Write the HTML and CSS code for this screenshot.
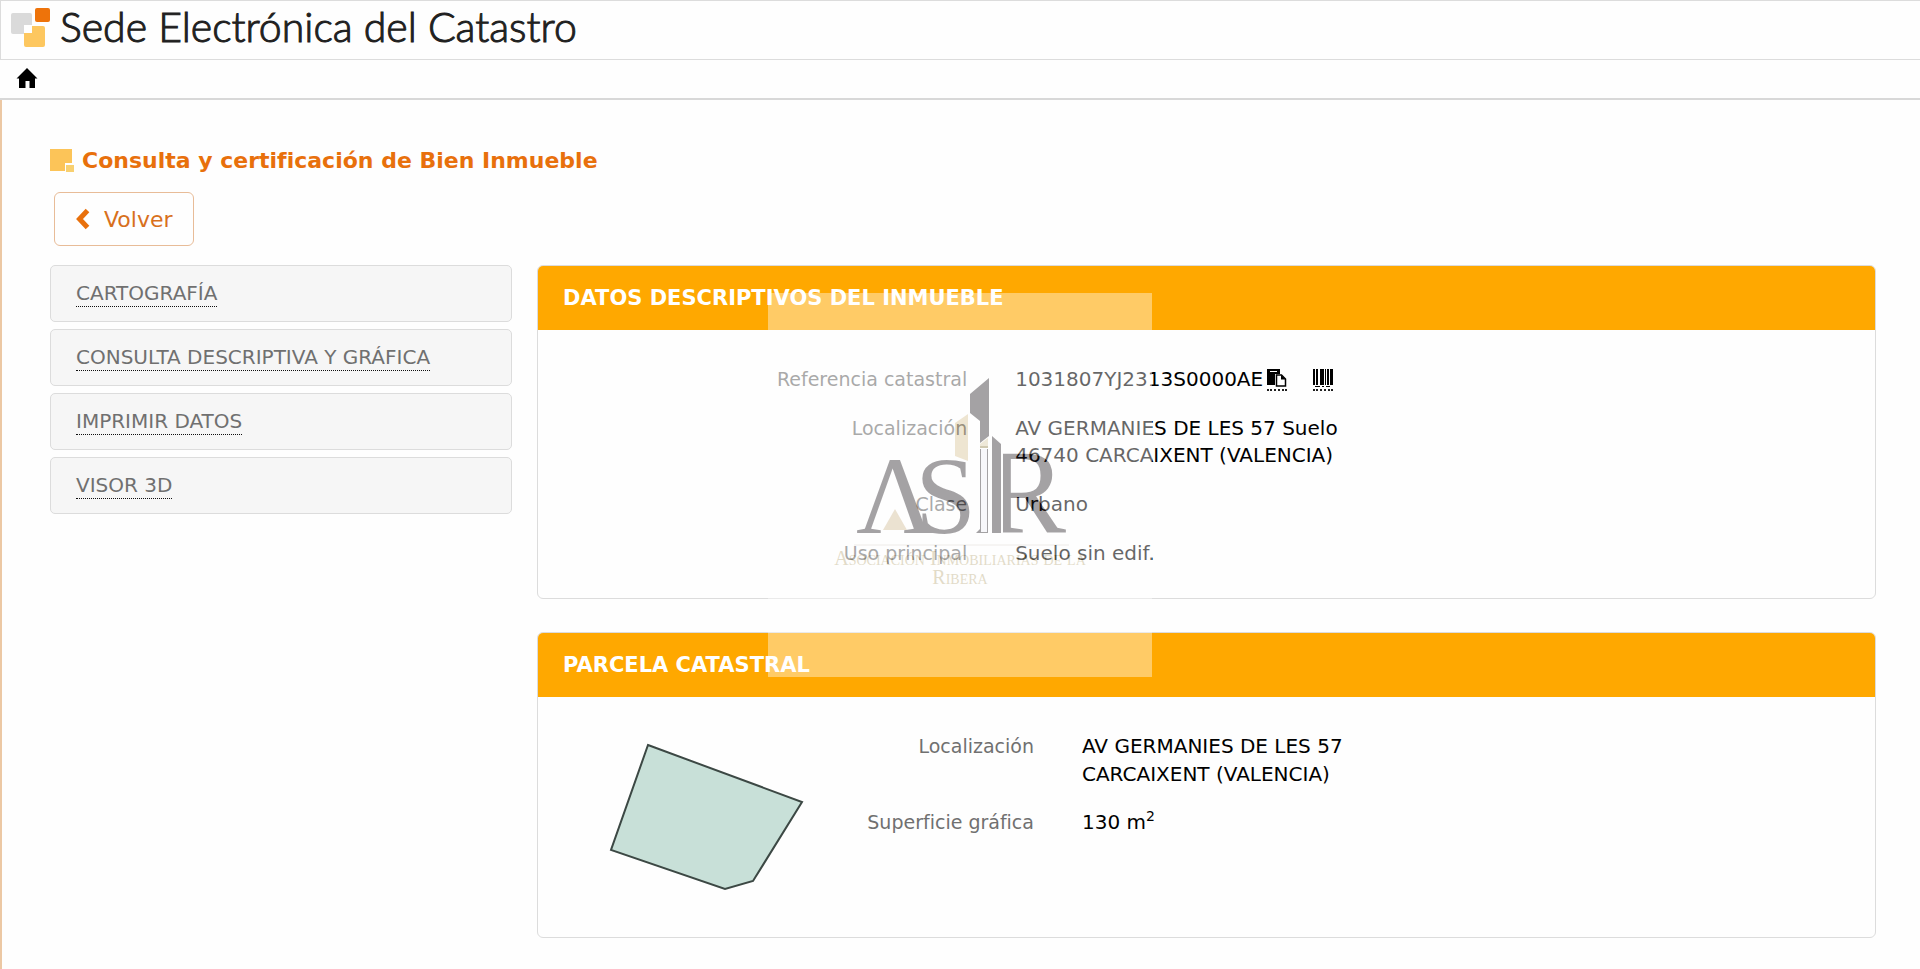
FILE: index.html
```html
<!DOCTYPE html>
<html lang="es">
<head>
<meta charset="utf-8">
<title>Sede Electrónica del Catastro</title>
<link rel="stylesheet" href="styles.css">
</head>
<body>
<header class="brand">
  <svg class="brand-logo" width="40" height="40" viewBox="0 0 40 40" aria-hidden="true">
    <rect x="0" y="5" width="21" height="21" rx="2" fill="#dadada"/>
    <rect x="24" y="0" width="15" height="14" rx="2" fill="#ee730a"/>
    <path d="M21 18h11a2 2 0 0 1 2 2v17a2 2 0 0 1-2 2H15a2 2 0 0 1-2-2V25h8z" fill="#fdc75f"/>
    <rect x="13" y="17" width="8" height="8" fill="#fff"/>
  </svg>
  <span class="brand-name">Sede Electrónica del Catastro</span>
</header>
<nav class="nav">
  <a class="home" href="#" aria-label="Inicio">
    <svg width="22" height="20" viewBox="0 0 22 20" aria-hidden="true"><path d="M11 0 21.500 10.500H19V20H13.500V13H9.500V20H3V10.500H.5z"/></svg>
  </a>
</nav>
<main class="page">
  <h1 class="title">
    <svg width="24" height="24" viewBox="0 0 24 24" aria-hidden="true"><path d="M0 0h22v14h-7v8H0z" fill="#fcc458"/><rect x="16" y="16" width="8" height="7" fill="#f8d070"/></svg>
    Consulta y certificación de Bien Inmueble
  </h1>
  <button class="back" type="button">
    <svg width="15" height="22" viewBox="0 0 15 22" aria-hidden="true"><path d="M12.500 2.500 4.500 11l8 8.500" fill="none" stroke="#e8700c" stroke-width="5"/></svg>
    Volver
  </button>
  <div class="columns">
    <ul class="menu">
      <li><a href="#">CARTOGRAFÍA</a></li>
      <li><a href="#">CONSULTA DESCRIPTIVA Y GRÁFICA</a></li>
      <li><a href="#">IMPRIMIR DATOS</a></li>
      <li><a href="#">VISOR 3D</a></li>
    </ul>
    <div class="panels">
      <section class="panel">
        <h2 class="panel-title">DATOS DESCRIPTIVOS DEL INMUEBLE</h2>
        <dl class="data data-main">
          <dt>Referencia catastral</dt>
          <dd class="reference">1031807YJ2313S0000AE
            <button class="tool" type="button" aria-label="Copiar"><svg width="20" height="18" viewBox="0 0 20 18" aria-hidden="true"><path d="M0 0h13v5H8v11H0z"/><path d="M3 2h7v1H3z" fill="#fff"/><path d="M9.500 6h5l4 4v7h-9z" fill="#fff" stroke="#000" stroke-width="1.500"/><path d="M14 6v4.500h5z"/></svg></button>
            <button class="tool" type="button" aria-label="Código de barras"><svg width="20" height="18" viewBox="0 0 20 18" aria-hidden="true"><path d="M0 0h2v16H0zM3 0h2v16H3zM7 0h4v16H7zM12 0h1v16h-1zM14 0h2v16h-2zM17 0h3v16h-3zM2 17h5v1H2zM9 17h2v1H9zM13 17h4v1h-4z"/></svg></button>
          </dd>
          <dt>Localización</dt>
          <dd>AV GERMANIES DE LES 57 Suelo<br>46740 CARCAIXENT (VALENCIA)</dd>
          <dt>Clase</dt>
          <dd>Urbano</dd>
          <dt>Uso principal</dt>
          <dd>Suelo sin edif.</dd>
        </dl>
      </section>
      <section class="panel">
        <h2 class="panel-title">PARCELA CATASTRAL</h2>
        <div class="parcel">
          <svg class="plot" width="196" height="148" viewBox="0 0 196 148" role="img" aria-label="Plano de la parcela"><path d="M39 2 193 59 144 138 116 146 2 107z" fill="#c8e0d8" stroke="#3c4844" stroke-width="2"/></svg>
          <dl class="data data-parcel">
            <dt>Localización</dt>
            <dd>AV GERMANIES DE LES 57<br>CARCAIXENT (VALENCIA)</dd>
            <dt>Superficie gráfica</dt>
            <dd>130 m<sup>2</sup></dd>
          </dl>
        </div>
      </section>
    </div>
  </div>
</main>
<svg class="watermark" viewBox="768 292 384 384" aria-hidden="true">
  <defs><clipPath id="bowl"><rect x="1003" y="440" width="80" height="100"/></clipPath></defs>
  <rect x="768" y="292" width="384" height="384" fill="#fff"/>
  <g fill="#201a20">
    <text class="mark" x="856" y="532">Λ</text>
    <text class="mark" x="915" y="532">S</text>
    <text class="mark mark-wide" x="986" y="532" clip-path="url(#bowl)">R</text>
    <path d="M968 410h11v70l-11-8z" fill="#fff"/>
    <path d="M970 393 989 377v58l-9 7v-22l-10-8z"/>
    <path d="M992 435 1001 443v89h-9zM976 532l4-4v-80h8v84z"/>
  </g>
  <path d="M981 448h6v83h-6z" fill="#eeeef6"/>
  <path d="M955 422 968 413v47l-13-5z" fill="#d8c090"/>
  <path d="M980 443 988 437v9h-8z" fill="#d8c8a0"/>
  <path d="M980 445h8v2h-8z" fill="#8c7c40"/>
  <path d="M883 529 895 508 907 529z" fill="#d0b890"/>
  <path d="M854 544h215" stroke="#d8d0c8"/>
  <text class="caption" x="960" y="564">Asociación Inmobiliarias de la</text>
  <text class="caption" x="960" y="583">Ribera</text>
</svg>
</body>
</html>
```
FILE: styles.css
```css
* { box-sizing: border-box; }
body {
  margin: 0;
  min-height: 100vh;
  display: flex;
  flex-direction: column;
  background: #fefefe;
  color: #000;
  font: 19px/27px "DejaVu Sans", Verdana, sans-serif;
}
.brand {
  display: flex;
  gap: 9px;
  height: 60px;
  padding: 7px 10px;
  border: 1px solid #dcdcdc;
  border-right: 0;
}
.brand-name {
  font: 300 41px/38px Lato, sans-serif;
  color: #202020;
  -webkit-text-stroke: 1px #202020;
}
.nav {
  height: 40px;
  padding: 8px 16px;
  border-bottom: 2px solid #d8d8d8;
}
.home { display: block; width: 22px; }
.home svg { display: block; }
.page {
  flex: 1;
  padding: 45px 44px 20px 48px;
  border-left: 2px solid #ecc8a4;
}
.title {
  display: flex;
  align-items: center;
  gap: 8px;
  margin: 0 0 16px;
  font-size: 22px;
  line-height: 31px;
  color: #e8700c;
}
.back {
  display: flex;
  align-items: center;
  gap: 14px;
  height: 54px;
  margin: 0 0 19px 4px;
  padding: 0 20px;
  border: 1px solid #e8bc98;
  border-radius: 6px;
  background: #fefefe;
  font: inherit;
  font-size: 22px;
  color: #d8701c;
}
.columns {
  display: grid;
  grid-template-columns: 462fr 1339fr;
  gap: 25px;
}
.menu {
  display: flex;
  flex-direction: column;
  gap: 7px;
  margin: 0;
  padding: 0;
  list-style: none;
}
.menu li {
  height: 57px;
  padding: 14px 25px;
  border: 1px solid #dcdcdc;
  border-radius: 5px;
  background: #f6f6f6;
}
.menu a {
  display: inline-block;
  font-size: 20px;
  line-height: 26px;
  color: #707070;
  text-decoration: none;
  border-bottom: 1px dotted #101010;
}
.panels {
  display: flex;
  flex-direction: column;
  gap: 33px;
}
.panel {
  border: 1px solid #dcdcdc;
  border-radius: 6px;
  overflow: hidden;
}
.panel-title {
  margin: 0;
  padding: 18px 25px;
  background: #ffa800;
  font-size: 21px;
  line-height: 28px;
  color: #fff;
}
.data {
  display: grid;
  column-gap: 48px;
  row-gap: 22px;
  margin: 0;
}
.data dt { text-align: right; color: #707070; }
.data dd { margin: 0; font-size: 20px; }
.data sup {
  font-size: 14px;
  line-height: 0;
}
.data-main {
  grid-template-columns: 32.1% 1fr;
  padding: 36px 0 31px;
}
.data .reference { display: flex; }
.tool {
  align-self: center;
  margin: 0 0 0 4px;
  padding: 0 0 2px;
  border: 0;
  border-bottom: 2px dotted #202020;
  background: none;
}
.tool svg { display: block; }
.tool + .tool { margin-left: 26px; }
.parcel {
  display: flex;
  align-items: flex-start;
  padding: 35px 0 46px 71px;
}
.plot { margin-top: 11px; flex: none; }
.data-parcel {
  flex: 1;
  grid-template-columns: 21.4% 1fr;
  row-gap: 20px;
  line-height: 28px;
}
.watermark {
  position: fixed;
  top: 50%;
  left: 50%;
  width: 20vw;
  transform: translate(-50%, -50%);
  opacity: .4;
  pointer-events: none;
}
.mark { font: 110px "Liberation Serif", serif; }
.mark-wide { font-size: 120px; }
.caption {
  font: small-caps 20px "Liberation Serif", serif;
  text-anchor: middle;
  fill: #b8a878;
}
```
